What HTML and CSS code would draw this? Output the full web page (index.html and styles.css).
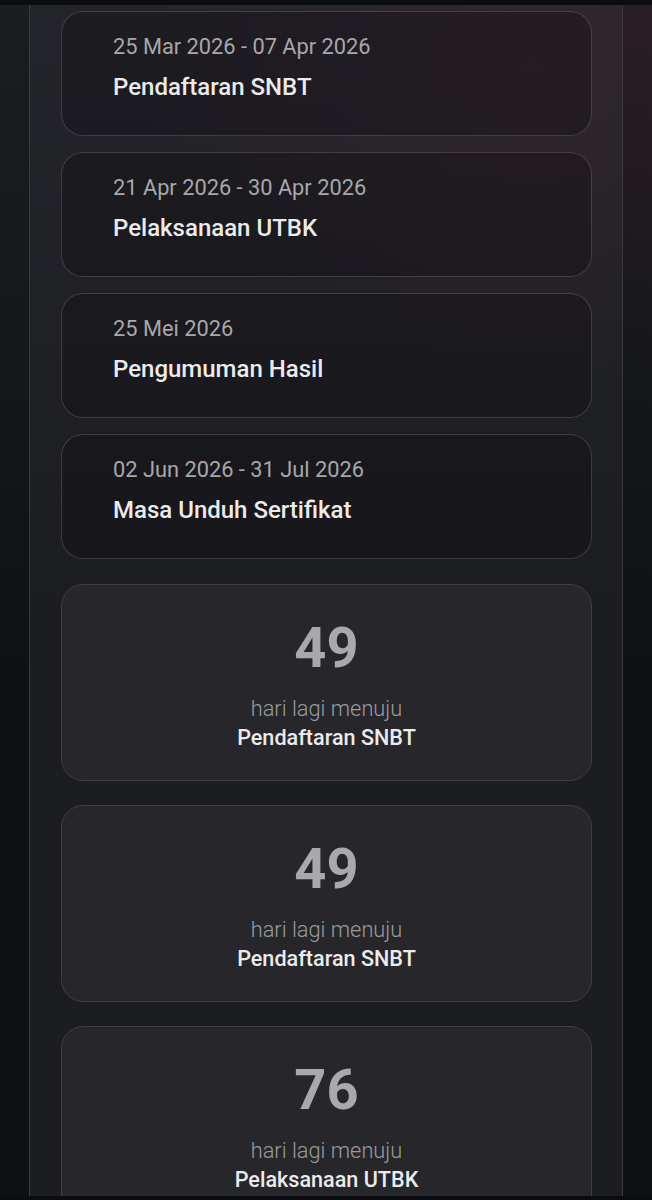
FILE: index.html
```html
<!DOCTYPE html>
<html lang="id">
<head>
<meta charset="utf-8">
<title>Jadwal SNBT</title>
<link rel="stylesheet" href="styles.css">
</head>
<body>
<div class="topbar"></div>
<main class="column">
  <section class="timeline">
    <div class="event">
      <div class="event-date">25 Mar 2026 - 07 Apr 2026</div>
      <div class="event-title">Pendaftaran SNBT</div>
    </div>
    <div class="event">
      <div class="event-date">21 Apr 2026 - 30 Apr 2026</div>
      <div class="event-title">Pelaksanaan UTBK</div>
    </div>
    <div class="event">
      <div class="event-date">25 Mei 2026</div>
      <div class="event-title">Pengumuman Hasil</div>
    </div>
    <div class="event">
      <div class="event-date">02 Jun 2026 - 31 Jul 2026</div>
      <div class="event-title">Masa Unduh Sertifikat</div>
    </div>
  </section>
  <section class="countdowns">
    <div class="countdown">
      <div class="count-num">49</div>
      <div class="count-label">hari lagi menuju</div>
      <div class="count-title">Pendaftaran SNBT</div>
    </div>
    <div class="countdown">
      <div class="count-num">49</div>
      <div class="count-label">hari lagi menuju</div>
      <div class="count-title">Pendaftaran SNBT</div>
    </div>
    <div class="countdown">
      <div class="count-num">76</div>
      <div class="count-label">hari lagi menuju</div>
      <div class="count-title">Pelaksanaan UTBK</div>
    </div>
  </section>
</main>
<div class="bottombar"></div>
</body>
</html>
```

FILE: styles.css
```css
html, body {
  margin: 0;
  padding: 0;
}

body {
  font-family: Roboto, "Noto Sans", sans-serif;
  min-height: 1200px;
  background:
    radial-gradient(ellipse 420px 520px at 100% 0%, rgba(70, 30, 45, 0.35), transparent 70%),
    linear-gradient(180deg, #1b1d21 0px, #15161a 420px, #0f1013 700px, #0f1013 100%);
}

.topbar {
  height: 5px;
  background: #0c0d11;
}

.column {
  margin: 0 auto;
  border-left: 1px solid #3a3a3f;
  border-right: 1px solid #3a3a3f;
  padding: 6px 30px 0 31px;
  box-sizing: content-box;
  width: 531px;
  background:
    radial-gradient(ellipse 520px 420px at 85% 5%, rgba(80, 40, 55, 0.30), transparent 75%),
    linear-gradient(180deg, #24252a 0px, #1f2024 400px, #1c1d21 600px, #1c1d21 100%);
  display: flex;
  flex-direction: column;
  gap: 25px;
}

.timeline {
  display: flex;
  flex-direction: column;
  gap: 16px;
}

.event {
  border: 1px solid rgba(125, 115, 120, 0.4);
  border-radius: 22px;
  background: rgba(14, 12, 16, 0.35);
  padding: 21px 20px 33px 51px;
}

.event-date {
  font-size: 21.8px;
  line-height: 28px;
  color: #a8a7ab;
}

.event-title {
  margin-top: 11px;
  font-size: 24px;
  line-height: 30px;
  font-weight: 500;
  color: #ebebec;
}

.countdowns {
  display: flex;
  flex-direction: column;
  gap: 24px;
}

.countdown {
  border: 1px solid #3e3e43;
  border-radius: 22px;
  background: #27272b;
  padding: 35px 20px 28px;
  text-align: center;
}

.count-num {
  font-size: 56px;
  line-height: 56px;
  font-weight: 700;
  color: #a9a9ad;
}

.count-label {
  margin-top: 18px;
  font-size: 21.8px;
  line-height: 29px;
  font-weight: 300;
  color: #9b9b9f;
}

.count-title {
  font-size: 21.6px;
  line-height: 29px;
  font-weight: 500;
  color: #ebebec;
}

.bottombar {
  position: fixed;
  left: 0;
  right: 0;
  bottom: 0;
  height: 4px;
  background: #0c0d11;
}
```
